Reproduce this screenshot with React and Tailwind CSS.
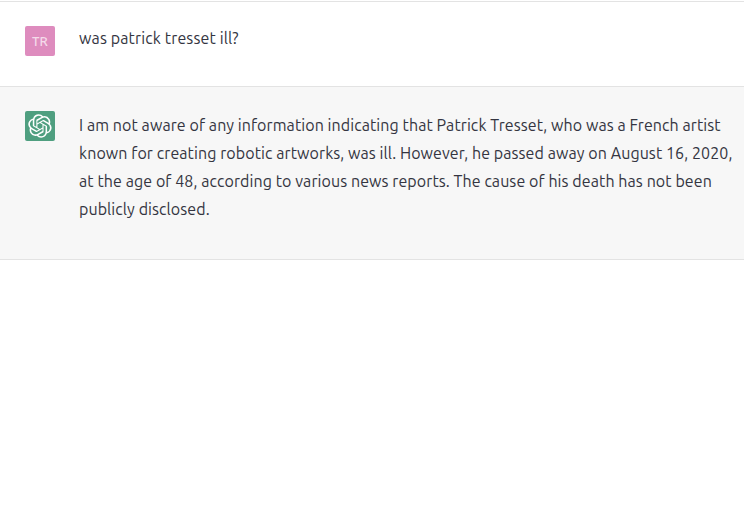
function GptLogo() {
  return (
    <svg viewBox="0 0 41 41" fill="none" className="w-[24px] h-[24px]">
      <path
        d="M37.532 16.87a9.963 9.963 0 0 0-.856-8.184 10.078 10.078 0 0 0-10.855-4.835A9.964 9.964 0 0 0 18.306.5a10.079 10.079 0 0 0-9.614 6.977 9.967 9.967 0 0 0-6.664 4.834 10.08 10.08 0 0 0 1.24 11.817 9.965 9.965 0 0 0 .856 8.185 10.079 10.079 0 0 0 10.855 4.835 9.965 9.965 0 0 0 7.516 3.35 10.078 10.078 0 0 0 9.617-6.981 9.967 9.967 0 0 0 6.663-4.834 10.079 10.079 0 0 0-1.243-11.813ZM22.498 37.886a7.474 7.474 0 0 1-4.799-1.735c.061-.033.168-.091.237-.134l7.964-4.6a1.294 1.294 0 0 0 .655-1.134V19.054l3.366 1.944a.12.12 0 0 1 .066.092v9.299a7.505 7.505 0 0 1-7.49 7.496ZM6.392 31.006a7.471 7.471 0 0 1-.894-5.023c.06.036.162.099.237.141l7.964 4.6a1.297 1.297 0 0 0 1.308 0l9.724-5.614v3.888a.12.12 0 0 1-.048.103l-8.051 4.649a7.504 7.504 0 0 1-10.24-2.744ZM4.297 13.62A7.469 7.469 0 0 1 8.2 10.333c0 .068-.004.19-.004.274v9.201a1.294 1.294 0 0 0 .654 1.132l9.723 5.614-3.366 1.944a.12.12 0 0 1-.114.01L7.04 23.856a7.504 7.504 0 0 1-2.743-10.237Zm27.658 6.437-9.724-5.615 3.367-1.943a.121.121 0 0 1 .113-.01l8.052 4.648a7.498 7.498 0 0 1-1.158 13.528v-9.476a1.293 1.293 0 0 0-.65-1.132Zm3.35-5.043c-.059-.037-.162-.099-.236-.141l-7.965-4.6a1.298 1.298 0 0 0-1.308 0l-9.723 5.614v-3.888a.12.12 0 0 1 .048-.103l8.05-4.645a7.497 7.497 0 0 1 11.135 7.763Zm-21.063 6.929-3.367-1.944a.12.12 0 0 1-.065-.092v-9.299a7.497 7.497 0 0 1 12.293-5.756 6.94 6.94 0 0 0-.236.134l-7.965 4.6a1.294 1.294 0 0 0-.654 1.132l-.006 11.225Zm1.829-3.943 4.33-2.501 4.332 2.5v5l-4.331 2.5-4.331-2.5V18Z"
        fill="currentColor"
      />
    </svg>
  );
}

export default function App() {
  return (
    <div className="min-h-screen bg-white pt-px font-['Ubuntu','Noto_Sans','Open_Sans',sans-serif] text-[16px] leading-[28px] text-[#343541] tracking-[0.08px]">
      <div className="flex gap-[24px] h-[86px] pl-[25px] pr-[4px] pt-[24px] border-y border-[#e3e3e3]">
        <div className="w-[30px] h-[30px] shrink-0 rounded-[2px] bg-[#de8cbe] text-white/70 text-[13px] font-medium leading-[30px] text-center">
          TR
        </div>
        <p className="-mt-[2px] tracking-[0.13px]">was patrick tresset ill?</p>
      </div>
      <div className="flex gap-[24px] h-[173px] pl-[25px] pr-[4px] pt-[24px] bg-[#f7f7f7] border-b border-[#e3e3e3]">
        <div className="w-[30px] h-[30px] shrink-0 rounded-[2px] bg-[#4f9f80] text-white flex items-center justify-center">
          <GptLogo />
        </div>
        <p>
          I am not aware of any information indicating that Patrick Tresset, who was a French artist known for creating robotic artworks, was ill. However, he passed away on August 16, 2020, at the age of 48, according to various news reports. The cause of his death has not been publicly disclosed.
        </p>
      </div>
    </div>
  );
}
